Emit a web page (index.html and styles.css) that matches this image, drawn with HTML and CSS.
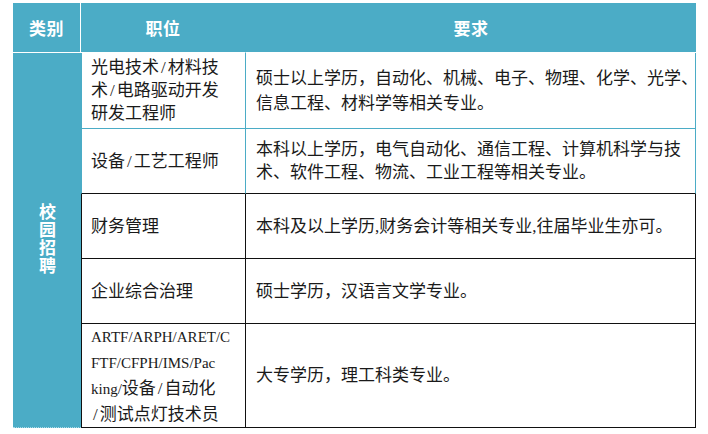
FILE: index.html
```html
<!DOCTYPE html>
<html lang="zh-CN">
<head>
<meta charset="utf-8">
<title>校园招聘</title>
<link rel="stylesheet" href="styles.css">
</head>
<body>
<table class="jobs">
  <colgroup>
    <col class="w1"><col class="w2"><col class="w3">
  </colgroup>
  <thead>
    <tr class="head">
      <th class="h1">类别</th>
      <th class="h2">职位</th>
      <th class="h3">要求</th>
    </tr>
  </thead>
  <tbody>
    <tr class="r1 teal">
      <td class="cat" rowspan="5"><div class="vert">校园招聘</div></td>
      <td class="pos">光电技术<span class="sl">/</span>材料技<br>术<span class="sl">/</span>电路驱动开发<br>研发工程师</td>
      <td class="req">硕士以上学历，自动化、机械、电子、物理、化学、光学、<br>信息工程、材料学等相关专业。</td>
    </tr>
    <tr class="r2 teal darkbottom">
      <td class="pos">设备<span class="sl">/</span>工艺工程师</td>
      <td class="req">本科以上学历，电气自动化、通信工程、计算机科学与技<br>术、软件工程、物流、工业工程等相关专业。</td>
    </tr>
    <tr class="r3 dark">
      <td class="pos">财务管理</td>
      <td class="req">本科及以上学历<span class="lat">,</span>财务会计等相关专业<span class="lat">,</span>往届毕业生亦可。</td>
    </tr>
    <tr class="r4 dark">
      <td class="pos">企业综合治理</td>
      <td class="req">硕士学历，汉语言文学专业。</td>
    </tr>
    <tr class="r5 dark">
      <td class="pos tall"><span class="lat">ARTF/ARPH/ARET/C</span><br><span class="lat">FTF/CFPH/IMS/Pac</span><br><span class="lat">king/</span>设备<span class="sl">/</span>自动化<br><span class="sl">/</span>测试点灯技术员</td>
      <td class="req">大专学历，理工科类专业。</td>
    </tr>
  </tbody>
</table>
</body>
</html>
```

FILE: styles.css
```css
html, body {
  margin: 0;
  padding: 0;
  background: #ffffff;
}

body {
  padding: 3px 0 0 13px;
  font-family: "Liberation Serif", "Noto Sans CJK SC", sans-serif;
  color: #1a1a1a;
}

.jobs {
  border-collapse: separate;
  border-spacing: 0;
  table-layout: fixed;
  width: 683px;
}

.w1 { width: 68px; }
.w2 { width: 165px; }
.w3 { width: 450px; }

.jobs th,
.jobs td {
  box-sizing: border-box;
  padding: 0;
}

.head th {
  height: 50px;
  background: #4bacc6;
  color: #ffffff;
  font-family: "Noto Sans CJK SC", sans-serif;
  font-weight: 700;
  font-size: 17px;
  letter-spacing: 0.5px;
  text-align: center;
  vertical-align: middle;
  border-bottom: 1px solid #ffffff;
}

.head .h1 { border-right: 1px solid #ffffff; }
.head .h2 { border-right: 1px solid #4bacc6; }

.jobs .cat {
  background: #4bacc6;
  vertical-align: middle;
  text-align: center;
  border-bottom: 1px dotted #a9dbe8;
}

.vert {
  display: inline-block;
  writing-mode: vertical-rl;
  text-orientation: upright;
  color: #ffffff;
  font-family: "Noto Sans CJK SC", sans-serif;
  font-weight: 700;
  font-size: 17px;
  letter-spacing: 1px;
  line-height: 18px;
  padding-top: 2px;
}

.jobs .pos,
.jobs .req {
  font-size: 17px;
  vertical-align: middle;
  white-space: nowrap;
  text-align: left;
}

.jobs .pos {
  padding-left: 9px;
  line-height: 23px;
}

.jobs .req {
  padding-left: 10px;
  line-height: 25px;
}

.jobs .pos.tall { line-height: 25px; }

.lat {
  font-family: "Liberation Serif", serif;
}

.sl {
  padding: 0 2px;
}

.tall .lat { font-size: 15px; }

.teal .pos {
  border-left: 1px solid #4bacc6;
  border-right: 1px solid #4bacc6;
  border-bottom: 1px solid #4bacc6;
}

.teal .req {
  border-right: 1px solid #4bacc6;
  border-bottom: 1px solid #4bacc6;
}

.jobs .darkbottom .pos,
.jobs .darkbottom .req {
  border-bottom: 1px solid #111111;
}

.jobs .r2 .req { line-height: 23px; }

.dark .pos {
  border-left: 1px solid #111111;
  border-right: 1px solid #111111;
  border-bottom: 1px solid #111111;
}

.dark .req {
  border-right: 1px solid #111111;
  border-bottom: 1px solid #111111;
}

.r1 td { height: 76px; }
.r2 td { height: 65px; }
.r3 td { height: 65px; }
.r4 td { height: 65px; }
.r5 td { height: 100px; }
```
